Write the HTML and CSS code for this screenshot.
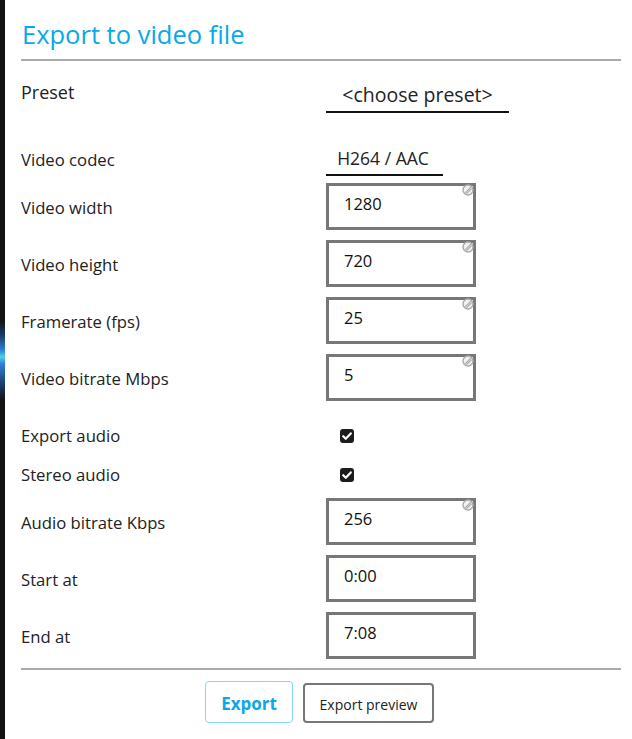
FILE: index.html
```html
<!DOCTYPE html>
<html>
<head>
<meta charset="utf-8">
<link rel="stylesheet" href="styles.css">
</head>
<body>
<div class="strip"></div>
<div class="panel">
  <div class="header"><h1 class="title">Export to video file</h1></div>
  <div class="form">
    <div class="row row-preset">
      <div class="label label-lg">Preset</div>
      <div class="select select-preset">&lt;choose preset&gt;</div>
    </div>
    <div class="row row-codec">
      <div class="label label-codec">Video codec</div>
      <div class="select select-codec">H264 / AAC</div>
    </div>
    <div class="row row-input first">
      <div class="label">Video width</div>
      <div class="input"><span class="val">1280</span><svg class="clear" width="12" height="12" viewBox="0 0 12 12"><circle cx="6" cy="6" r="5" fill="#f2f2f2" stroke="#aaa" stroke-width="1.4"/><path d="M3.2 8.8 L8.8 3.2 M4.6 9.6 L9.6 4.6" stroke="#aaa" stroke-width="1.2"/></svg></div>
    </div>
    <div class="row row-input">
      <div class="label">Video height</div>
      <div class="input"><span class="val">720</span><svg class="clear" width="12" height="12" viewBox="0 0 12 12"><circle cx="6" cy="6" r="5" fill="#f2f2f2" stroke="#aaa" stroke-width="1.4"/><path d="M3.2 8.8 L8.8 3.2 M4.6 9.6 L9.6 4.6" stroke="#aaa" stroke-width="1.2"/></svg></div>
    </div>
    <div class="row row-input">
      <div class="label">Framerate (fps)</div>
      <div class="input"><span class="val">25</span><svg class="clear" width="12" height="12" viewBox="0 0 12 12"><circle cx="6" cy="6" r="5" fill="#f2f2f2" stroke="#aaa" stroke-width="1.4"/><path d="M3.2 8.8 L8.8 3.2 M4.6 9.6 L9.6 4.6" stroke="#aaa" stroke-width="1.2"/></svg></div>
    </div>
    <div class="row row-input">
      <div class="label">Video bitrate Mbps</div>
      <div class="input"><span class="val">5</span><svg class="clear" width="12" height="12" viewBox="0 0 12 12"><circle cx="6" cy="6" r="5" fill="#f2f2f2" stroke="#aaa" stroke-width="1.4"/><path d="M3.2 8.8 L8.8 3.2 M4.6 9.6 L9.6 4.6" stroke="#aaa" stroke-width="1.2"/></svg></div>
    </div>
    <div class="row row-check first-check">
      <div class="label">Export audio</div>
      <div class="check"><svg width="14" height="14" viewBox="0 0 14 14"><path d="M3.2 7.2 L5.8 9.8 L10.8 4.4" fill="none" stroke="#fff" stroke-width="2.2" stroke-linecap="round" stroke-linejoin="round"/></svg></div>
    </div>
    <div class="row row-check second-check">
      <div class="label">Stereo audio</div>
      <div class="check"><svg width="14" height="14" viewBox="0 0 14 14"><path d="M3.2 7.2 L5.8 9.8 L10.8 4.4" fill="none" stroke="#fff" stroke-width="2.2" stroke-linecap="round" stroke-linejoin="round"/></svg></div>
    </div>
    <div class="row row-input after-check">
      <div class="label">Audio bitrate Kbps</div>
      <div class="input"><span class="val">256</span><svg class="clear" width="12" height="12" viewBox="0 0 12 12"><circle cx="6" cy="6" r="5" fill="#f2f2f2" stroke="#aaa" stroke-width="1.4"/><path d="M3.2 8.8 L8.8 3.2 M4.6 9.6 L9.6 4.6" stroke="#aaa" stroke-width="1.2"/></svg></div>
    </div>
    <div class="row row-input">
      <div class="label">Start at</div>
      <div class="input"><span class="val">0:00</span></div>
    </div>
    <div class="row row-input">
      <div class="label">End at</div>
      <div class="input"><span class="val">7:08</span></div>
    </div>
  </div>
  <div class="footer">
    <button class="btn btn-primary">Export</button>
    <button class="btn btn-secondary">Export preview</button>
  </div>
</div>
</body>
</html>
```
FILE: styles.css
```css
html, body {
  margin: 0;
  padding: 0;
  background: #fff;
}
body {
  display: flex;
  width: 632px;
  height: 739px;
  overflow: hidden;
  font-family: "Open Sans", "Noto Sans", sans-serif;
  color: #222;
}
.strip {
  width: 5px;
  flex: none;
  background: linear-gradient(to bottom, #121212 0px, #121212 320px, #1a3a66 335px, #2f7fd8 350px, #4fd0e0 357px, #2f7fd8 364px, #1a3a66 385px, #121212 400px, #121212 100%);
}
.panel {
  flex: 1;
  padding: 0 11px 0 16px;
}
.header {
  height: 59px;
  border-bottom: 2px solid #aaa;
  display: flex;
  align-items: flex-end;
}
.title {
  margin: 0 0 9px 1px;
  font-size: 25.5px;
  font-weight: 400;
  line-height: 32px;
  color: #09a9e8;
}
.form {
  display: flex;
  flex-direction: column;
}
.row {
  display: flex;
  align-items: center;
}
.label {
  width: 305px;
  flex: none;
  font-size: 16.7px;
  line-height: 22px;
  color: #222;
}
.label-lg {
  font-size: 18px;
}
.row-preset {
  height: 62px;
}
.select {
  border-bottom: 2px solid #111;
  text-align: center;
  box-sizing: border-box;
}
.select-preset {
  width: 183px;
  height: 40px;
  font-size: 19.5px;
  line-height: 24px;
  padding-top: 10px;
  margin-top: 2px;
}
.row-codec {
  height: 60px;
  align-items: flex-end;
  padding-bottom: 7px;
  box-sizing: border-box;
}
.label-codec {
  margin-bottom: 5px;
}
.select-codec {
  width: 117px;
  height: 32px;
  font-size: 17.5px;
  line-height: 22px;
  padding-top: 3px;
  padding-right: 3px;
}
.row-input {
  height: 47px;
  margin-top: 10px;
}
.row-input.first {
  margin-top: 0;
}
.row-input .label {
  margin-top: 3px;
}
.input {
  position: relative;
  width: 150px;
  height: 47px;
  box-sizing: border-box;
  border: 3px solid #777;
  padding: 7px 0 0 15px;
  font-size: 16.5px;
  line-height: 22px;
  color: #111;
}
.clear {
  position: absolute;
  top: -2px;
  right: -1px;
}
.row-check {
  height: 36px;
}
.first-check {
  margin-top: 14px;
  height: 42px;
}
.after-check {
  margin-top: 5px;
}
.check {
  margin-left: 14px;
  width: 14px;
  height: 14px;
  border-radius: 3px;
  background: #1c1c1c;
  display: flex;
}
.footer {
  margin-top: 9px;
  border-top: 2px solid #aaa;
  padding-top: 11px;
  display: flex;
  justify-content: center;
  align-items: flex-end;
  gap: 10px;
  padding-right: 3px;
}
.btn {
  font-family: "Open Sans", "Noto Sans", sans-serif;
  background: #fff;
  border-radius: 4px;
  box-sizing: border-box;
  padding: 0;
  cursor: pointer;
}
.btn-primary {
  width: 88px;
  height: 42px;
  border: 1.5px solid #86d6f5;
  color: #0aa8e8;
  font-weight: 700;
  font-size: 17px;
  padding-top: 2px;
}
.btn-secondary {
  width: 131px;
  height: 40px;
  border: 2px solid #777;
  color: #222;
  font-size: 14px;
  padding-top: 2px;
}
```
